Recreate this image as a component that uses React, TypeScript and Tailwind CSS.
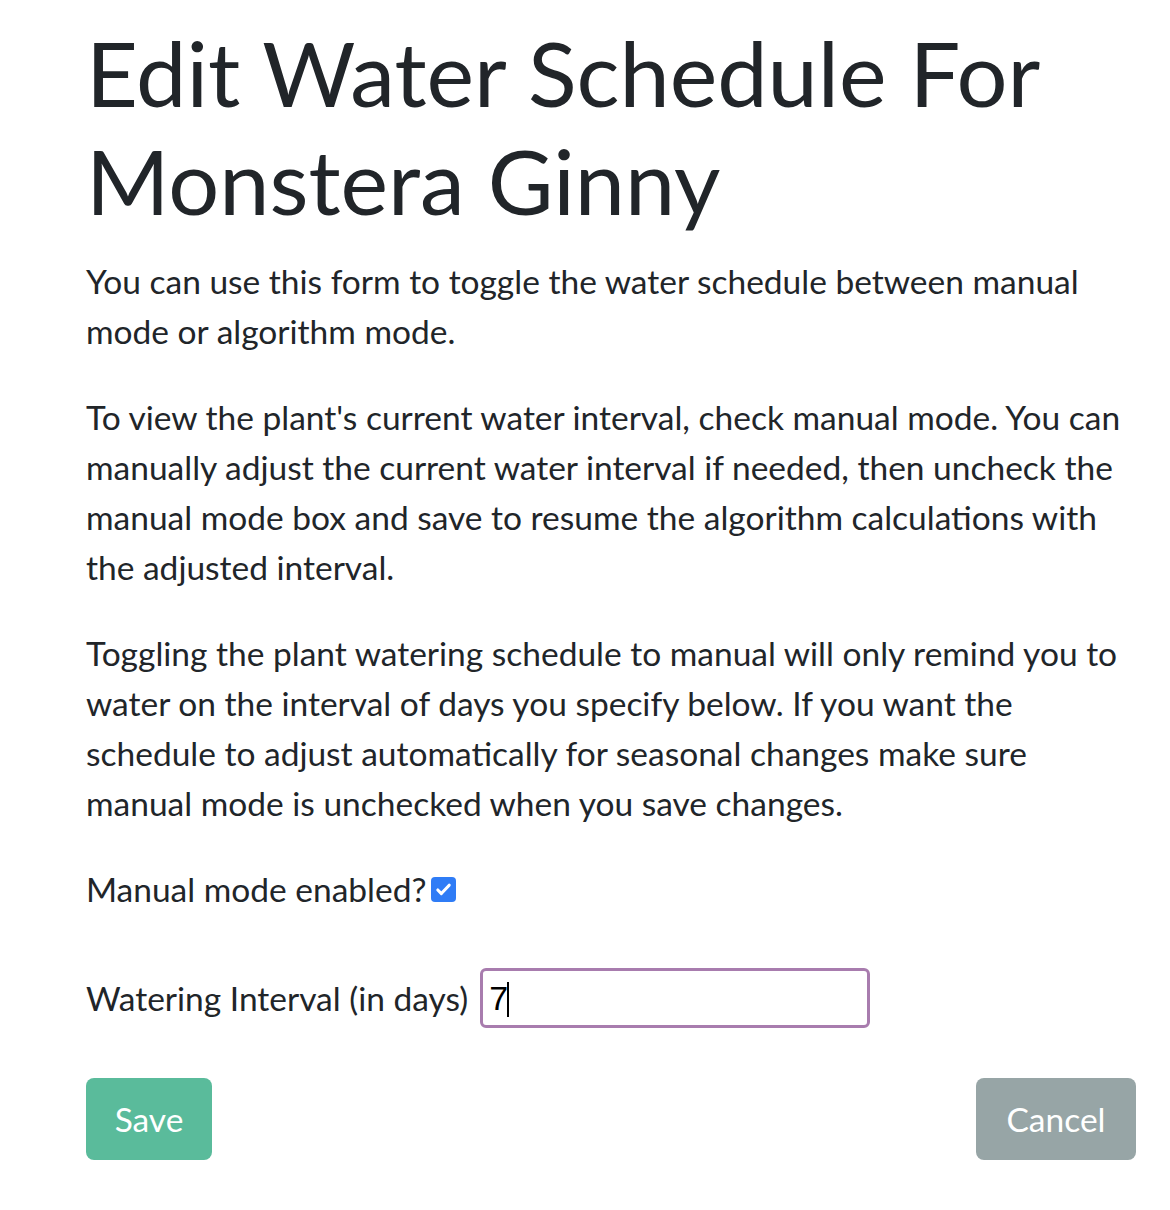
import { useState } from 'react';

export default function App() {
  const [manual, setManual] = useState(true);
  const [interval, setInterval] = useState('7');

  return (
    <div className="min-h-[1210px] bg-white text-[#212529] font-['Lato',sans-serif]">
      <div className="ml-[86px] w-[1050px] pt-[18px]">
        <h1 className="text-[90px] leading-[108px] font-normal mb-[22px]">
          Edit Water Schedule For Monstera Ginny
        </h1>

        <p className="text-[33.5px] leading-[50px] mb-[36px]">
          You can use this form to toggle the water schedule between manual mode or algorithm mode.
        </p>
        <p className="text-[33.5px] leading-[50px] mb-[36px]">
          To view the plant's current water interval, check manual mode. You can manually adjust the current
          water interval if needed, then uncheck the manual mode box and save to resume the algorithm
          calculations with the adjusted interval.
        </p>
        <p className="text-[33.5px] leading-[50px] mb-[36px]">
          Toggling the plant watering schedule to manual will only remind you to water on the interval of days
          you specify below. If you want the schedule to adjust automatically for seasonal changes make sure
          manual mode is unchecked when you save changes.
        </p>

        <div className="flex items-center h-[50px] text-[33.5px] mb-[54px]">
          <span>Manual mode enabled?</span>
          <button
            onClick={() => setManual(!manual)}
            className={`ml-[5px] w-[25px] h-[25px] rounded-[4px] flex items-center justify-center ${
              manual ? 'bg-[#2f7cf6]' : 'border-2 border-gray-400 bg-white'
            }`}
          >
            {manual && (
              <svg viewBox="0 0 16 16" className="w-[19px] h-[19px]">
                <path d="M3.2 8.4l3 3 6.6-7" fill="none" stroke="white" strokeWidth="2.6" strokeLinecap="round" strokeLinejoin="round" />
              </svg>
            )}
          </button>
        </div>

        <div className="flex items-center text-[33.5px] mb-[50px]">
          <span>Watering Interval (in days)</span>
          <div className="relative ml-[12px]">
            <input
              value={interval}
              onChange={(e) => setInterval(e.target.value)}
              className="block w-[390px] h-[60px] rounded-[6px] border-[3px] border-[#a87cae] px-[6px] text-[34px] text-black outline-none font-['Liberation_Sans',sans-serif]"
            />
            <span className="absolute left-[27px] top-[14px] w-[2px] h-[35px] bg-black" />
          </div>
        </div>

        <div className="flex justify-between">
          <button className="w-[126px] h-[82px] rounded-[8px] bg-[#5abb9b] text-white text-[33.5px]">Save</button>
          <button className="w-[160px] h-[82px] rounded-[8px] bg-[#97a5a6] text-white text-[33.5px]">Cancel</button>
        </div>
      </div>
    </div>
  );
}
